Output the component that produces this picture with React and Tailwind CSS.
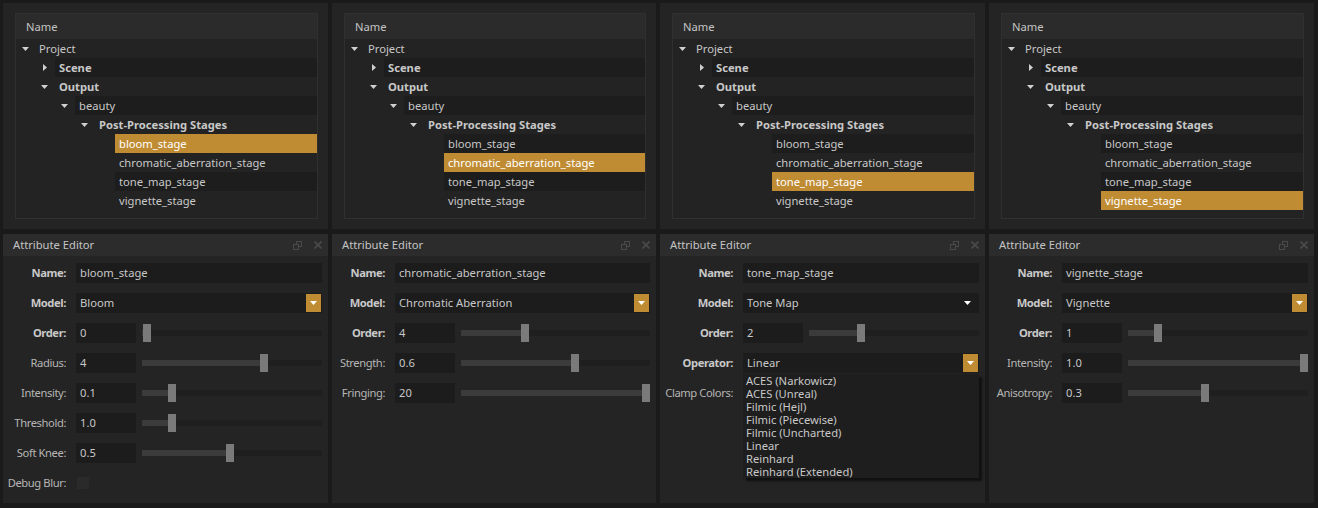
import React from 'react';

const FONT = "font-['Noto_Sans',_'Open_Sans',_sans-serif]";

const treeRows = [
  { label: 'Project', level: 0, arrow: 'down' },
  { label: 'Scene', level: 1, arrow: 'right', bold: true },
  { label: 'Output', level: 1, arrow: 'down', bold: true },
  { label: 'beauty', level: 2, arrow: 'down' },
  { label: 'Post-Processing Stages', level: 3, arrow: 'down', bold: true },
  { label: 'bloom_stage', level: 4 },
  { label: 'chromatic_aberration_stage', level: 4 },
  { label: 'tone_map_stage', level: 4 },
  { label: 'vignette_stage', level: 4 },
];

// labelCol: width of the form's label column, as the widest label sets it
const columns = [
  {
    selected: 5,
    labelCol: 'grid-cols-[56px_1fr]',
    name: 'bloom_stage',
    model: 'Bloom',
    rows: [
      { label: 'Order:', bold: true, value: '0', frac: 0 },
      { label: 'Radius:', value: '4', frac: 0.684 },
      { label: 'Intensity:', value: '0.1', frac: 0.146 },
      { label: 'Threshold:', value: '1.0', frac: 0.146 },
      { label: 'Soft Knee:', value: '0.5', frac: 0.485 },
      { label: 'Debug Blur:', type: 'check' },
    ],
  },
  {
    selected: 6,
    labelCol: 'grid-cols-[46px_1fr]',
    name: 'chromatic_aberration_stage',
    model: 'Chromatic Aberration',
    rows: [
      { label: 'Order:', bold: true, value: '4', frac: 0.33 },
      { label: 'Strength:', value: '0.6', frac: 0.605 },
      { label: 'Fringing:', value: '20', frac: 1 },
    ],
  },
  {
    selected: 7,
    labelCol: 'grid-cols-[66px_1fr]',
    name: 'tone_map_stage',
    model: 'Tone Map',
    plainModel: true,
    rows: [
      { label: 'Order:', bold: true, value: '2', frac: 0.29 },
      { label: 'Operator:', bold: true, type: 'operator' },
      { label: 'Clamp Colors:', type: 'empty' },
    ],
  },
  {
    selected: 8,
    labelCol: 'grid-cols-[56px_1fr]',
    name: 'vignette_stage',
    model: 'Vignette',
    rows: [
      { label: 'Order:', bold: true, value: '1', frac: 0.145 },
      { label: 'Intensity:', value: '1.0', frac: 1 },
      { label: 'Anisotropy:', value: '0.3', frac: 0.42 },
    ],
  },
];

const operators = [
  'ACES (Narkowicz)',
  'ACES (Unreal)',
  'Filmic (Hejl)',
  'Filmic (Piecewise)',
  'Filmic (Uncharted)',
  'Linear',
  'Reinhard',
  'Reinhard (Extended)',
];

const Arrow = ({ dir }) =>
  dir === 'down' ? (
    <svg width="7" height="4" viewBox="0 0 7 4">
      <polygon points="0,0 7,0 3.5,4" fill="#d0d0d0" />
    </svg>
  ) : (
    <svg width="4" height="7" viewBox="0 0 4 7">
      <polygon points="0,0 4,3.5 0,7" fill="#d0d0d0" />
    </svg>
  );

const Tree = ({ selected }) => (
  <div className="h-[206px] border border-[#303030] bg-[#232323]">
    <div className="flex h-[25px] items-center bg-[#2b2b2b] pt-[1px] pl-[10px] text-[#c4c4c4]">Name</div>
    {treeRows.map((row, i) => {
      const isSel = i === selected;
      const alt = i % 2 === 1;
      return (
        <div key={row.label} className="flex h-[19px]">
          <div
            className="flex shrink-0 items-center justify-end"
            style={{ width: 19 + row.level * 20 }}
          >
            {row.arrow && (
              <span className="flex w-[20px] items-center justify-center pr-[1px]">
                <Arrow dir={row.arrow} />
              </span>
            )}
          </div>
          <div
            className={
              'flex flex-1 items-center pt-[1px] pl-[4px] ' +
              (isSel ? 'bg-[#bf8c34] text-white' : alt ? 'bg-[#1d1d1d] text-[#c8c8c8]' : 'text-[#c8c8c8]') +
              (row.bold ? ' font-bold' : '')
            }
          >
            {row.label}
          </div>
        </div>
      );
    })}
  </div>
);

const DropBtn = ({ plain }) =>
  plain ? (
    <span className="mr-[4px] flex h-[18px] w-[15px] items-center justify-center">
      <svg width="7" height="4" viewBox="0 0 7 4">
        <polygon points="0,0 7,0 3.5,4" fill="#ffffff" />
      </svg>
    </span>
  ) : (
    <span className="mr-[1px] flex h-[18px] w-[15px] items-center justify-center bg-[#bf8c34]">
      <svg width="7" height="4" viewBox="0 0 7 4">
        <polygon points="0,0 7,0 3.5,4" fill="#ffffff" />
      </svg>
    </span>
  );

const Combo = ({ text, plain, children }) => (
  <div className="relative flex h-[20px] items-center justify-between bg-[#1c1c1c] pl-[4px] text-[#c8c8c8]">
    <span className="pt-[1px]">{text}</span>
    <DropBtn plain={plain} />
    {children}
  </div>
);

const Slider = ({ value, frac }) => (
  <div className="flex h-[20px] items-center">
    <div className="flex h-[20px] w-[60px] shrink-0 items-center bg-[#1c1c1c] pt-[1px] pl-[4px] text-[#c8c8c8]">
      {value}
    </div>
    <div className="relative ml-[6px] h-[6px] flex-1 bg-[#1f1f1f]">
      <div
        className="absolute top-0 left-0 h-[6px] bg-[#3b3b3b]"
        style={{ width: `calc(${frac} * (100% - 9px) + 2px)` }}
      />
      <div
        className="absolute top-[-6px] h-[18px] w-[8px] bg-[#7a7a7a]"
        style={{ left: `calc(${frac} * (100% - 9px) + 1px)` }}
      />
    </div>
  </div>
);

const Label = ({ text, bold }) => (
  <div
    className={
      'flex h-[20px] items-center justify-end whitespace-nowrap pt-[1px] tracking-[-0.4px] ' +
      (bold ? 'font-bold text-[#c8c8c8]' : 'text-[#b6b6b6]')
    }
  >
    {text}
  </div>
);

const FieldFor = ({ row }) => {
  if (row.type === 'check')
    return (
      <div className="flex h-[20px] items-center pl-[1px]">
        <div className="h-[12px] w-[12px] bg-[#2a2a2a]" />
      </div>
    );
  if (row.type === 'empty') return <div className="h-[20px]" />;
  if (row.type === 'operator')
    return (
      <Combo text="Linear">
        <div className="absolute top-[21px] right-0 left-0 z-10 flex flex-col bg-[#1e1e1e] pl-[3px] shadow-[3px_3px_2px_rgba(0,0,0,0.55)]">
          {operators.map((op) => (
            <div key={op} className="flex h-[13px] items-center leading-[13px] text-[#c8c8c8]">
              {op}
            </div>
          ))}
        </div>
      </Combo>
    );
  return <Slider value={row.value} frac={row.frac} />;
};

const FloatIcon = () => (
  <svg width="9" height="9" viewBox="0 0 9 9" fill="none" stroke="#4a4a4a" strokeWidth="1">
    <rect x="3.5" y="0.5" width="5" height="5" />
    <rect x="0.5" y="3.5" width="5" height="5" fill="#2c2c2c" />
  </svg>
);

const CloseIcon = () => (
  <svg width="8" height="8" viewBox="0 0 8 8" stroke="#4a4a4a" strokeWidth="1.6">
    <line x1="0.5" y1="0.5" x2="7.5" y2="7.5" />
    <line x1="7.5" y1="0.5" x2="0.5" y2="7.5" />
  </svg>
);

const AttributeEditor = ({ col }) => (
  <div className="flex h-[269px] flex-col bg-[#242424]">
    <div className="flex h-[22px] shrink-0 items-center justify-between bg-[#2c2c2c] pl-[10px] pr-[6px] text-[#c4c4c4]">
      <span>Attribute Editor</span>
      <div className="flex items-center gap-[12px]">
        <FloatIcon />
        <CloseIcon />
      </div>
    </div>
    <div className={`grid ${col.labelCol} gap-x-[10px] gap-y-[10px] pt-[7px] pl-[7px] pr-[6px]`}>
      <Label text="Name:" bold />
      <div className="flex h-[20px] items-center bg-[#1c1c1c] pt-[1px] pl-[4px] text-[#c8c8c8]">{col.name}</div>
      <Label text="Model:" bold />
      <Combo text={col.model} plain={col.plainModel} />
      {col.rows.map((row) => (
        <React.Fragment key={row.label}>
          <Label text={row.label} bold={row.bold} />
          <FieldFor row={row} />
        </React.Fragment>
      ))}
    </div>
  </div>
);

export default function App() {
  return (
    <div
      className={`grid h-[508px] w-[1318px] grid-cols-[325px_324px_325px_325px] gap-x-[4px] overflow-hidden bg-[#1a1a1a] px-[3px] pt-[3px] text-[11.2px] ${FONT}`}
    >
      {columns.map((col) => (
        <div key={col.name} className="flex flex-col gap-[5px]">
          <div className="h-[226px] bg-[#242424] pt-[10px] pl-[12px] pr-[10px]">
            <Tree selected={col.selected} />
          </div>
          <AttributeEditor col={col} />
        </div>
      ))}
    </div>
  );
}
